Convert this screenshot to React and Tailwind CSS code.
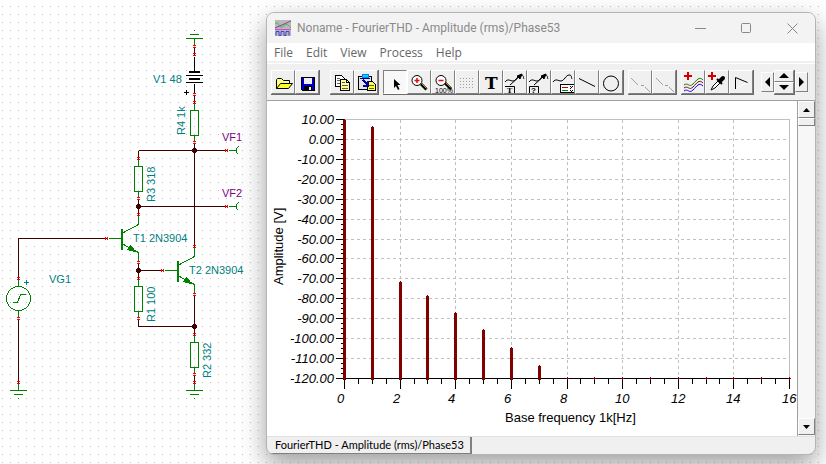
import { Fragment } from "react";

const WIRE = "#400000";
const GREEN = "#008000";
const PIN = "#ff0000";

// pin marks on the schematic, [x, y] for vertical and horizontal wires
const verticalPins = [
  [194, 46], [194, 54], [194, 94], [194, 102], [194, 142], [138, 158],
  [138, 198], [138, 214], [138, 262], [138, 278], [138, 318], [194, 246],
  [194, 294], [194, 334], [194, 374], [194, 382], [18, 278], [18, 318],
  [18, 382],
];
const horizontalPins = [[226, 150], [226, 206], [106, 238], [162, 270]];
const nodes = [[194, 150], [138, 206], [138, 270], [194, 326]];
const resistors = [[194, 110], [138, 166], [138, 286], [194, 342]];

const labels = [
  { text: "V1 48", x: 153, y: 83 },
  { text: "T1 2N3904", x: 133, y: 242 },
  { text: "T2 2N3904", x: 189, y: 274 },
  { text: "VG1", x: 49, y: 283 },
];
const sideLabels = [
  { text: "R4 1k", x: 185, y: 135 },
  { text: "R3 318", x: 155, y: 202 },
  { text: "R1 100", x: 155, y: 322 },
  { text: "R2 332", x: 211, y: 378 },
];

const Transistor = ({ x, y }) => (
  <g stroke={GREEN} fill="none">
    <path d={`M${x - 14} ${y}h13 M${x + 1} ${y - 6}l15 -8v-9 M${x + 1} ${y + 6}l15 8v9`} />
    <path d={`M${x - 0.5} ${y - 10}v21`} strokeWidth="2" />
    <path d={`M${x + 5} ${y + 11}l3 -4l5 6z`} fill={GREEN} />
  </g>
);

const Schematic = () => (
  <svg
    viewBox="0 0 266 464"
    width="266"
    height="464"
    className="shrink-0"
    role="img"
    aria-label="Circuit schematic">
    <g transform="translate(.5 .5)" shapeRendering="crispEdges" fill="none">
      {/* wires */}
      <path
        stroke={WIRE}
        d="M194 46v8 M194 94v8 M194 142v104 M138 150H226 M138 150v8 M138 198v16 M138 206H226 M18 278V238H106 M138 262v16 M138 270h24 M138 318v8h56 M194 294v40 M194 374v8 M18 318v64"
      />
      <path
        stroke={GREEN}
        d="M194 38v7 M194 103v7 M194 135v6 M138 159v7 M138 191v6 M138 279v7 M138 311v6 M194 335v7 M194 367v6 M194 383v7 M18 279v7 M18 310v7 M18 383v7 M228 150h7 M228 206h7"
      />
      {/* grounds */}
      <path
        stroke={GREEN}
        d="M185.500 38h17 M189.500 34h9 M193.500 30h1 M185.500 390h17 M189.500 394h9 M193.500 398h1 M9.500 390h17 M13.500 394h9 M17.500 398h1"
      />
      {/* battery */}
      <path stroke="#000" d="M194 56v15 M194 83v9 M185.500 75h17 M185.500 82h17 M183.500 92h5 M186 89.500v5" />
      <path fill="#000" d="M188.500 70.500h11v2h-11z M188.500 77.500h11v2h-11z" />
      {resistors.map(([x, y]) => (
        <rect key={`${x}-${y}`} x={x - 4} y={y} width="8" height="25" stroke={GREEN} />
      ))}
      <Transistor x={122} y={238} />
      <Transistor x={178} y={270} />
      {/* outputs */}
      <path stroke={GREEN} d="M238 146l-2 2v4l2 2 M238 202l-2 2v4l2 2" />
      {/* generator */}
      <circle cx="18" cy="298" r="12" stroke={GREEN} />
      <path stroke={GREEN} d="M12 302h5l3 -8h5" />
      <path stroke="#008080" d="M23.500 282h5 M26 279.500v5" />
      {nodes.map(([x, y]) => (
        <path
          key={`${x}-${y}`}
          fill={WIRE}
          stroke={WIRE}
          d={`M${x - 1} ${y - 2}h2l1 1v2l-1 1h-2l-1 -1v-2z`}
        />
      ))}
      {verticalPins.map(([x, y]) => (
        <path
          key={`${x}-${y}`}
          fill={PIN}
          d={`M${x - 1.5} ${y - 1.5}h3v1h-3z M${x - 1.5} ${y + 0.5}h3v1h-3z`}
        />
      ))}
      {horizontalPins.map(([x, y]) => (
        <path
          key={`${x}-${y}`}
          fill={PIN}
          d={`M${x - 1.5} ${y - 1.5}h1v3h-1z M${x + 0.5} ${y - 1.5}h1v3h-1z`}
        />
      ))}
    </g>
    <g className="text-[11px] font-['Liberation_Sans',sans-serif]" fill="#008080">
      {labels.map((l) => (
        <text key={l.text} x={l.x} y={l.y}>
          {l.text}
        </text>
      ))}
      {sideLabels.map((l) => (
        <text key={l.text} transform={`translate(${l.x} ${l.y}) rotate(-90)`}>
          {l.text}
        </text>
      ))}
      <text x="222" y="141" fill="#800080">
        VF1
      </text>
      <text x="222" y="197" fill="#800080">
        VF2
      </text>
    </g>
  </svg>
);

// plot area inside the chart drawing
const LEFT = 77;
const RIGHT = 522;
const TOP = 18;
const BOTTOM = 277;

const xAt = (k) => Math.round(LEFT + ((RIGHT - LEFT) * k) / 16);
const yAt = (v) => Math.round(TOP + ((BOTTOM - TOP) * (10 - v)) / 130);

const levels = Array.from({ length: 14 }, (_, i) => 10 - i * 10);
const harmonics = [10, 6.7, -71.5, -78.5, -87, -95.5, -104.5, -113.5];

const Chart = () => (
  <svg
    viewBox="0 0 530 335"
    className="block h-auto min-w-0 flex-1 bg-white"
    role="img"
    aria-label="Amplitude spectrum">
    <g transform="translate(.5 .5)" shapeRendering="crispEdges" fill="none">
      <g stroke="#c0c0c0">
        <path d={`M${LEFT} ${TOP}H${RIGHT}V${BOTTOM}`} />
        {levels.slice(1, -1).map((v) => (
          <path key={v} d={`M${LEFT + 0.5} ${yAt(v)}H${RIGHT}`} strokeDasharray="3 3" />
        ))}
        {[2, 4, 6, 8, 10, 12, 14].map((k) => (
          <path key={k} d={`M${xAt(k)} ${TOP + 0.5}V${BOTTOM}`} strokeDasharray="3 3" />
        ))}
      </g>
      <g stroke="#000">
        <path d={`M${LEFT} ${TOP}V${BOTTOM}H${RIGHT}`} />
        {levels.map((v) => (
          <path key={v} d={`M${LEFT - 9} ${yAt(v)}H${LEFT}`} />
        ))}
        {Array.from({ length: 52 }, (_, i) => (
          <path key={i} d={`M${LEFT - 4} ${yAt(10 - i * 2.5)}H${LEFT}`} />
        ))}
        {Array.from({ length: 33 }, (_, i) => (
          <path key={i} d={`M${xAt(i / 2)} ${BOTTOM}v${i % 4 === 0 ? 10 : 5}`} />
        ))}
      </g>
      {harmonics.map((v, k) => (
        <Fragment key={k}>
          <path d={`M${xAt(k)} ${yAt(v) - 1}V${BOTTOM + 1}`} stroke="#800000" />
          <path d={`M${xAt(k)} ${yAt(v)}V${BOTTOM + 1}`} stroke="#800000" strokeWidth="3" />
        </Fragment>
      ))}
      {[8, 9, 10, 11, 12, 13, 14, 15, 16].map((k) => (
        <path
          key={k}
          d={`M${xAt(k) - 1.5} ${BOTTOM}h3 M${xAt(k)} ${BOTTOM - 1.5}v3`}
          stroke="#800000"
        />
      ))}
    </g>
    <g className="text-[13px] font-['Liberation_Sans',sans-serif]" fill="#000">
      {levels.map((v) => (
        <text key={v} x="67" y={yAt(v) + 5} textAnchor="end" fontStyle="italic">
          {v.toFixed(2)}
        </text>
      ))}
      {[0, 2, 4, 6, 8, 10, 12, 14, 16].map((k) => (
        <text key={k} x={xAt(k) - 7} y="302" fontStyle="italic">
          {k}
        </text>
      ))}
      <text x="238" y="321">
        Base frequency 1k[Hz]
      </text>
      <text transform="translate(16 184) rotate(-90)">Amplitude [V]</text>
    </g>
  </svg>
);

const Icon = ({ children }) => (
  <svg
    viewBox="0 0 24 24"
    width="24"
    height="24"
    className="-m-px block shrink-0"
    fill="none"
    stroke="#000"
    aria-hidden="true">
    {children}
  </svg>
);

const WAVE = "M2 12c3 -4 5 -1 8 -1s5 -6 8 -6s2 2 3 4";

const groups = [
  {
    gap: "mr-[10px]",
    tools: [
      {
        name: "Open",
        icon: (
          <>
            <path d="M5.500 18.500v-9l1 -1h4l2 2h6v3" fill="#ffff80" />
            <path d="M5.500 18.500l4 -5h12l-4 5z" fill="#ffff30" />
          </>
        ),
      },
      {
        name: "Save",
        icon: (
          <g shapeRendering="crispEdges">
            <path d="M6.500 7.500h13v13h-12l-1 -1z" fill="#0000c8" />
            <path d="M9 8h8v6h-8z" fill="#f0f0f0" stroke="none" />
            <path d="M9 16h8v4h-8z" fill="#000" stroke="none" />
            <path d="M14 17h2v3h-2z" fill="#f0f0f0" stroke="none" />
          </g>
        ),
      },
    ],
  },
  {
    gap: "mr-1",
    tools: [
      {
        name: "Copy",
        icon: (
          <g shapeRendering="crispEdges">
            <path d="M5.500 5.500h6l3 3v8h-9z" fill="#fff" />
            <path d="M7 8.500h3 M7 10.500h3 M7 13.500h3" stroke="#606060" />
            <path d="M10.500 9.500h6l3 3v8h-9z" fill="#ffffa0" />
            <path d="M16.500 9.500v3h3" />
            <path d="M12 12.500h3 M12 15.500h6 M12 18.500h6" stroke="#606040" />
          </g>
        ),
      },
      {
        name: "Paste",
        icon: (
          <g shapeRendering="crispEdges">
            <path d="M4.500 6.500h13v13h-13z" fill="#e4e4e4" />
            <path d="M8 4.500h6v3h-6z" fill="#00d8ff" stroke="#0080ff" />
            <path d="M6 8.500h10" stroke="#000080" />
            <path d="M13.500 11.500h5l3 3v6h-8z" fill="#ffff40" />
            <path d="M15 15.500h5 M15 18.500h5" stroke="#606020" />
            <path d="M9 10l5 5 M14 11v5h-5" stroke="#0000a0" strokeWidth="2" />
          </g>
        ),
      },
    ],
  },
  {
    gap: "mr-1",
    tools: [
      {
        name: "Select",
        pressed: true,
        icon: <path d="M11 9v9l2 -2l2 4l1.500 -1l-2 -4h3z" fill="#000" stroke="none" />,
      },
      {
        name: "Zoom in",
        icon: (
          <>
            <path d="M14 14l5.500 5.500" strokeWidth="3" />
            <path d="M14.500 13.500l5 5" stroke="#b09000" />
            <circle cx="10" cy="10.500" r="5" fill="#fff" />
            <path d="M10 8v5 M7.500 10.500h5" stroke="#f00000" strokeWidth="1.500" />
          </>
        ),
      },
      {
        name: "Zoom 100%",
        icon: (
          <>
            <path d="M14 13l6 6" strokeWidth="3" />
            <path d="M14.500 12.500l5 5" stroke="#b09000" />
            <circle cx="10" cy="10.500" r="5" fill="#fff" />
            <path d="M7.500 10.500h5" stroke="#f00000" strokeWidth="1.500" />
            <text x="4" y="23" fill="#000" stroke="none" className="text-[7px] font-['Liberation_Sans',sans-serif]">
              100%
            </text>
          </>
        ),
      },
      {
        name: "Grid",
        icon: (
          <path
            d="M5 8.500h14 M5 11.500h14 M5 14.500h14 M5 17.500h14"
            stroke="#a0a0a0"
            strokeDasharray="1 2"
            shapeRendering="crispEdges"
          />
        ),
      },
      {
        name: "Text",
        icon: (
          <text x="6" y="19" fill="#000" stroke="none" className="text-[17px] font-bold font-['DejaVu_Serif',serif]">
            T
          </text>
        ),
      },
      {
        name: "Text label",
        icon: (
          <>
            <path d={WAVE} />
            <path d="M7 15l10 -9" />
            <path d="M14 6l5 -2l-2 5z" fill="#000" />
            <path d="M2 16.500h9.500V23" />
            <text x="4" y="23" fill="#000" stroke="none" className="text-[7px] font-bold font-['DejaVu_Serif',serif]">
              T
            </text>
          </>
        ),
      },
      {
        name: "Value label",
        icon: (
          <>
            <path d={WAVE} />
            <path d="M7 15l10 -9" />
            <path d="M14 6l5 -2l-2 5z" fill="#000" />
            <path d="M2.500 23v-6.500h9V23" />
            <text x="4" y="23" fill="#000" stroke="none" className="text-[8px] font-bold font-['Liberation_Sans',sans-serif]">
              ?
            </text>
          </>
        ),
      },
      {
        name: "Legend",
        icon: (
          <>
            <path d={WAVE} />
            <g shapeRendering="crispEdges">
              <path d="M23 14.500h-13.500v8h13.500" fill="#fff" />
              <path d="M11 17.500h6" stroke="#c00000" />
              <path d="M11 20.500h6" stroke="#008000" />
              <path d="M19 16.500h1 M21 16.500h1 M20 17.500h1 M19 18.500h1 M19 20.500h1 M21 20.500h1 M20 21.500h1" />
            </g>
          </>
        ),
      },
      { name: "Line", icon: <path d="M4 8.500l16 8" /> },
      { name: "Ellipse", icon: <circle cx="12" cy="13.500" r="7.500" /> },
    ],
  },
  {
    gap: "mr-1",
    tools: [
      { name: "Cursor a", disabled: true, icon: <path d="M3 8l7 7 M13 15.500h3 M17 17l5 5" stroke="#a0a0a0" /> },
      { name: "Cursor b", disabled: true, icon: <path d="M4 8l7 7 M13 15.500h3 M17 17l5 5" stroke="#a0a0a0" /> },
    ],
  },
  {
    gap: "mr-[7px]",
    tools: [
      {
        name: "Add curves",
        icon: (
          <>
            <path d="M3 6h8 M7 2v8" stroke="#d00000" strokeWidth="2" />
            <path d="M3 15c4 -3 5 3 9 -1s6 -8 10 -4" stroke="#008000" />
            <path d="M3 18c4 -3 5 3 9 -1s6 -8 10 -4" stroke="#900000" />
            <path d="M3 21c4 -3 5 3 9 -1s6 -8 10 -4" stroke="#0000ff" />
          </>
        ),
      },
      {
        name: "Pick curve",
        icon: (
          <>
            <path d="M3 6h8 M7 2v8" stroke="#d00000" strokeWidth="2" />
            <path d="M6 20l2 -4l6 -6l2 2l-6 6z" fill="#fff" />
            <path d="M12 9l5 5" strokeWidth="2" />
            <path d="M15 11l3 -3" strokeWidth="4" strokeLinecap="round" />
          </>
        ),
      },
      {
        name: "Marker",
        icon: (
          <>
            <path d="M6.500 18.500l12 -6" stroke="#fff" />
            <path d="M6.500 19V7.500l12 5" />
          </>
        ),
      },
    ],
  },
];

const raised = "border border-t-white border-l-white border-r-[#808080] border-b-[#808080] bg-[#f0f0f0]";
const sunken = "border border-t-[#808080] border-l-[#808080] border-r-white border-b-white bg-[#f8f8f8]";

const Toolbar = () => (
  <div className="border-b border-[#a0a0a0] bg-[#f0f0f0] pt-[2px]">
    <div className="flex h-[37px] items-center border-t border-white pl-1">
      {groups.map((group) => (
        <div key={group.tools[0].name} className={`flex border-r border-b border-[#696969] ${group.gap}`}>
          {group.tools.map((tool) => (
            <button
              key={tool.name}
              type="button"
              aria-label={tool.name}
              disabled={tool.disabled}
              className={`size-6 overflow-hidden ${tool.pressed ? sunken : raised}`}>
              <Icon>{tool.icon}</Icon>
            </button>
          ))}
        </div>
      ))}
      <div className="flex items-center">
        <button type="button" aria-label="Previous" className={`flex h-5 w-[13px] items-center justify-center ${raised}`}>
          <svg width="5" height="10" viewBox="0 0 5 10">
            <path d="M5 0v10L0 5z" />
          </svg>
        </button>
        <div className="flex w-[21px] flex-col border-r border-b border-[#696969]">
          <button type="button" aria-label="Up" className={`flex h-3 items-center justify-center ${raised}`}>
            <svg width="10" height="5" viewBox="0 0 10 5">
              <path d="M0 5h10L5 0z" />
            </svg>
          </button>
          <button type="button" aria-label="Down" className={`flex h-3 items-center justify-center ${raised}`}>
            <svg width="10" height="5" viewBox="0 0 10 5">
              <path d="M0 0h10L5 5z" />
            </svg>
          </button>
        </div>
        <button type="button" aria-label="Next" className={`flex h-5 w-[13px] items-center justify-center ${raised}`}>
          <svg width="5" height="10" viewBox="0 0 5 10">
            <path d="M0 0v10L5 5z" />
          </svg>
        </button>
      </div>
    </div>
  </div>
);

const TitleBar = () => (
  <div className="flex h-[30px] items-center bg-[#f3f3f3] pl-2 text-[12px] text-[#8a8a8a] font-['Roboto',sans-serif]">
    <svg width="16" height="16" viewBox="0 0 16 16" fill="none" className="mr-[6px]" aria-hidden="true">
      <path d="M0 0h16v16H0z" fill="#b8b8b8" />
      <path d="M0 4c3 -5 4 5 7 3s4 -5 9 1" stroke="#40c040" />
      <path d="M0 8L16 1" stroke="#904090" />
      <path d="M0 9.500h16" stroke="#e040e0" />
      <path d="M1 15.500v-4h3v4h2v-4h3v4h2v-4h3v4" stroke="#4040e0" />
    </svg>
    <span className="grow">Noname - FourierTHD - Amplitude (rms)/Phase53</span>
    <button type="button" aria-label="Minimize" className="flex h-full w-[46px] items-center justify-center">
      <svg width="11" height="11" viewBox="0 0 11 11" stroke="#888" shapeRendering="crispEdges">
        <path d="M0 5.500h11" />
      </svg>
    </button>
    <button type="button" aria-label="Maximize" className="flex h-full w-[46px] items-center justify-center">
      <svg width="11" height="11" viewBox="0 0 11 11" stroke="#888" fill="none">
        <rect x=".5" y=".5" width="9" height="9" rx="1" />
      </svg>
    </button>
    <button type="button" aria-label="Close" className="flex h-full w-[46px] items-center justify-center">
      <svg width="11" height="11" viewBox="0 0 11 11" stroke="#888">
        <path d="M.5 .5l10 10 M10.500 .5l-10 10" />
      </svg>
    </button>
  </div>
);

const ScrollBar = () => (
  <div className="flex w-[18px] shrink-0 flex-col border-l border-[#a0a0a0] bg-[#f7f7f7] pb-px">
    <button type="button" aria-label="Scroll up" className={`flex h-[17px] items-center justify-center ${raised}`}>
      <svg width="7" height="4" viewBox="0 0 7 4">
        <path d="M0 4h7L3.500 0z" />
      </svg>
    </button>
    <div className={`h-2 ${raised}`}></div>
    <div className="grow"></div>
    <button type="button" aria-label="Scroll down" className={`flex h-[17px] items-center justify-center ${raised}`}>
      <svg width="7" height="4" viewBox="0 0 7 4">
        <path d="M0 0h7L3.500 4z" />
      </svg>
    </button>
  </div>
);

const App = () => {
  return (
    <div className="flex min-h-screen items-start bg-[#c0c0c0] bg-[linear-gradient(90deg,white_7px,transparent_7px),linear-gradient(white_7px,transparent_7px)] bg-size-[8px_8px] bg-position-[3px_7px]">
      <Schematic />
      <main className="mt-3 mr-[10px] mb-[9px] min-w-0 flex-1 overflow-hidden rounded-lg border border-[#b4b4b4] bg-[#f0f0f0] font-['Open_Sans',sans-serif] shadow-[0_10px_26px_rgba(0,0,0,0.38)]">
        <TitleBar />
        <nav className="flex h-[18px] items-center gap-[13px] bg-white pt-[2px] pl-[7px] text-[12px] text-[#666]">
          {["File", "Edit", "View", "Process", "Help"].map((item) => (
            <button key={item} type="button">
              {item}
            </button>
          ))}
        </nav>
        <Toolbar />
        <div className="flex">
          <Chart />
          <ScrollBar />
        </div>
        <div className="flex h-[18px] border-t border-[#e0e0e0]">
          <button
            type="button"
            className="border-r-2 border-b border-[#808080] pr-[6px] pl-2 text-[11px] leading-4 text-black font-['Lato',sans-serif]">
            FourierTHD - Amplitude (rms)/Phase53
          </button>
        </div>
      </main>
    </div>
  );
};

export default App;
